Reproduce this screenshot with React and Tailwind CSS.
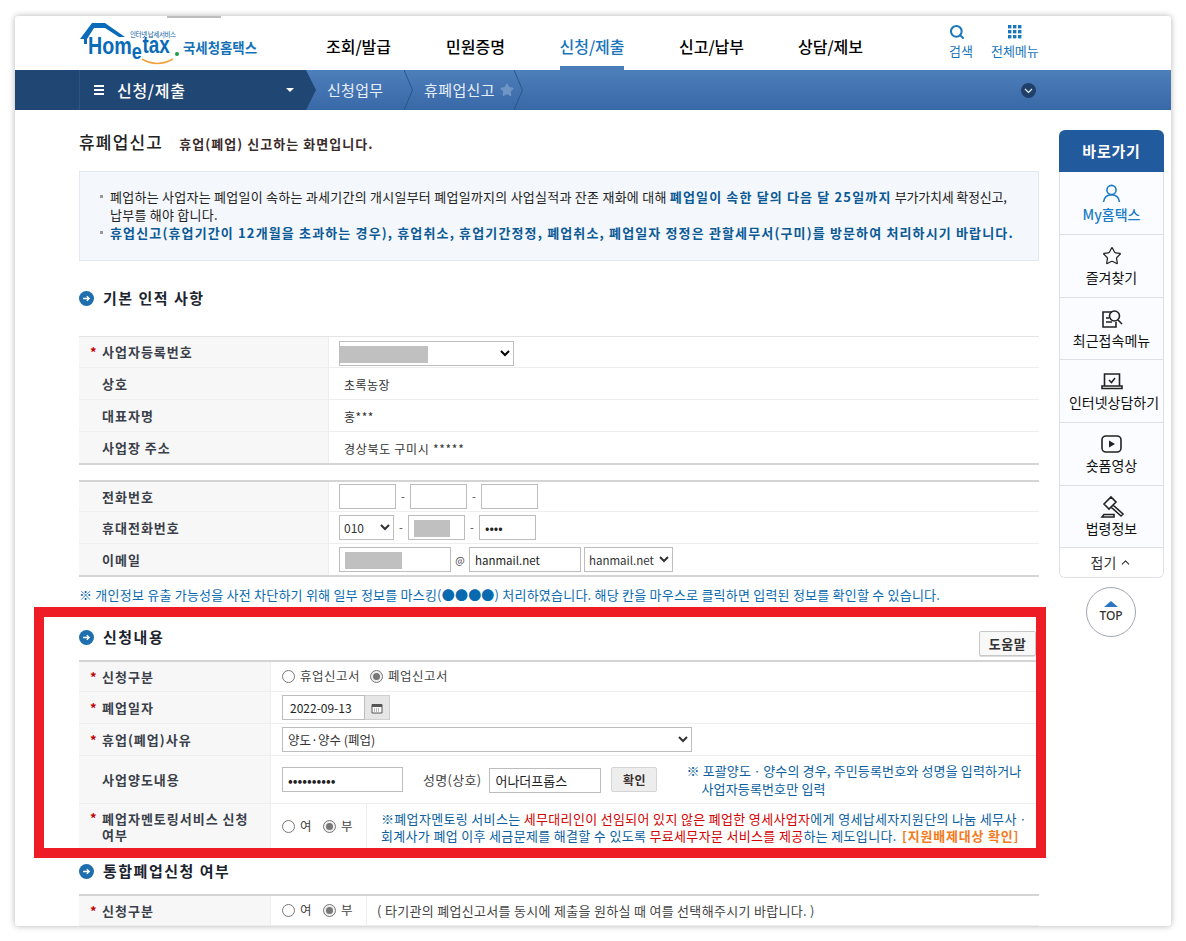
import React from "react";
import { Star, ChevronUp, Search } from "lucide-react";

const Bullet = () => (
  <svg width="15" height="15" viewBox="0 0 15 15" className="shrink-0">
    <circle cx="7.5" cy="7.5" r="7.5" fill="#1f6fae" />
    <path d="M4 7.5h6M7.8 5.2l2.4 2.3-2.4 2.3" stroke="#fff" strokeWidth="1.3" fill="none" />
  </svg>
);

const Section = ({ children, className = "" }) => (
  <div className={`flex items-center gap-[9px] ${className}`}>
    <Bullet />
    <span className="text-[15px] font-semibold tracking-[1.5px] text-[#1c2430]">{children}</span>
  </div>
);

const Req = () => <span className="absolute left-[11px] top-[calc(50%-8px)] text-[13px] font-bold leading-4 text-[#c00000]">*</span>;

const Row = ({ label, req, w = "w-[250px]", h = "h-8", border = "border-b border-[#eeeeee]", children, labelClass = "" }) => (
  <div className={`flex ${h} ${border}`}>
    <div className={`relative flex ${w} shrink-0 items-center border-r border-[#eeeeee] bg-[#f7f7f7] pl-[23px] text-[13px] font-semibold tracking-[1px] text-[#3a3f4a] ${labelClass}`}>
      {req && <Req />}
      <span>{label}</span>
    </div>
    <div className="flex min-w-0 flex-1 items-center">{children}</div>
  </div>
);

const Box = ({ w, mask, value, type = "text", maskW = 57, font = "text-[11.5px]" }) => (
  <span className="relative inline-block align-middle">
    <input readOnly type={type} defaultValue={value} className={`block h-[25px] ${w} border border-[#bdbdbd] bg-white px-[5px] ${font} text-[#222] outline-none`} />
    {mask && <span className="absolute left-[6px] top-[5px] h-[17px] bg-[#c0c0c0]" style={{ width: maskW }} />}
  </span>
);

const Radio = ({ on, label }) => (
  <span className="flex items-center gap-[5px] text-[12.5px] tracking-[0.5px] text-[#444]">
    <span className={`flex h-[13px] w-[13px] items-center justify-center rounded-full border ${on ? "border-[#777] bg-[#eee]" : "border-[#777] bg-white"}`}>
      {on && <span className="h-[7px] w-[7px] rounded-full bg-[#777]" />}
    </span>
    {label}
  </span>
);

const Dash = () => <span className="w-[14px] text-center text-[11px] text-[#444]">-</span>;

const Chevron = () => (
  <svg width="9" height="40" viewBox="0 0 9 40" className="shrink-0">
    <path d="M0 0l8.5 20L0 40" fill="none" stroke="#2c5487" strokeWidth="1" />
  </svg>
);

const Logo = () => (
  <svg width="182" height="46" viewBox="0 0 182 46" className="shrink-0">
    <path d="M1 19 L13 3 H26 L46 17 H40 L26 8 H15 L8 19 V24 H5 V19Z" fill="#0a6cb8" />
    <text x="51" y="17" fontSize="6.5" fill="#0b5c9f" textLength="46" fontFamily="'Noto Sans CJK KR',sans-serif">인터넷 납세서비스</text>
    <g transform="translate(9 0) scale(0.82 1)">
      <text x="0" y="34" fontWeight="700" fill="#0a6cb8" fontFamily="'Liberation Sans',sans-serif">
        <tspan fontSize="24">Hom</tspan>
        <tspan fontSize="22" y="39">e</tspan>
        <tspan fontSize="23" y="33" dx="1">tax</tspan>
      </text>
    </g>
    <circle cx="98" cy="34" r="2" fill="#1c9c4a" />
    <path d="M63 39 Q78 48 94 39" fill="none" stroke="#f2a23a" strokeWidth="1.5" />
    <text x="104" y="33" fontSize="14" fontWeight="700" fill="#1471b8" textLength="74" lengthAdjust="spacingAndGlyphs" fontFamily="'Noto Sans CJK KR',sans-serif">국세청홈택스</text>
  </svg>
);

const NavItem = ({ children, active, w }) => (
  <div className={`flex h-[54px] flex-col items-center justify-center whitespace-nowrap ${w}`}>
    <span className={`relative flex h-full w-full items-center justify-center pt-[6px] text-base font-medium ${active ? "text-[#1a75bb]" : "text-black"}`}>
      {children}
      {active && <span className="absolute bottom-0 left-0 right-0 h-1 bg-[#4b7db8]" />}
    </span>
  </div>
);

const SideItem = ({ icon, label, blue, h = "h-[63px]", labelClass = "" }) => (
  <div className={`flex ${h} flex-col items-center justify-center border-b border-[#dcdfe6] bg-[#fbfcff] pb-[2px] text-[14px] ${blue ? "font-medium text-[#1a7cc4]" : "text-[#111]"}`}>
    <span className="flex h-[24px] items-center">{icon}</span>
    <span className={`whitespace-nowrap leading-[18px] ${labelClass}`}>{label}</span>
  </div>
);

const ic = { fill: "none", stroke: "#222", strokeWidth: 1.6 };

export default function App() {
  return (
    <div className="relative h-[941px] w-[1186px] overflow-hidden bg-white font-['Noto_Sans_CJK_KR','Noto_Sans',sans-serif]">
      <div className="pl-[15px] pt-4">
        <div className="relative h-[910px] w-[1156px] overflow-hidden rounded-[3px] bg-white shadow-[0_0_6px_rgba(0,0,0,0.3)]">
          <span className="absolute left-[152px] top-0 h-[2px] w-[54px] bg-[#bdbdbd]" />
          {/* header */}
          <div className="flex h-[54px] items-center pl-[64px]">
            <Logo />
            <div className="ml-[65px] flex items-center">
              <NavItem w="w-[65px]">조회/발급</NavItem>
              <span className="w-[55px]" />
              <NavItem w="w-[59px]">민원증명</NavItem>
              <span className="w-[55px]" />
              <NavItem w="w-[64px]" active>신청/제출</NavItem>
              <span className="w-[55px]" />
              <NavItem w="w-[65px]">신고/납부</NavItem>
              <span className="w-[54px]" />
              <NavItem w="w-[65px]">상담/제보</NavItem>
            </div>
            <div className="ml-[86px] flex items-center gap-[18px] pb-[3px] text-[13px] text-[#1a75bb]">
              <div className="flex flex-col items-center leading-[16px]">
                <Search size={16} strokeWidth={3} className="mb-[3px] self-start" />
                검색
              </div>
              <div className="flex flex-col items-center leading-[16px]">
                <svg width="14" height="15" viewBox="0 0 14 15" className="mb-[3px]" fill="#1a75bb">
                  {[0, 5, 10].map((y) => [0, 5, 10].map((x) => <rect key={`${x}-${y}`} x={x} y={y} width="3.4" height="3.4" />))}
                </svg>
                전체메뉴
              </div>
            </div>
          </div>
          {/* tab bar */}
          <div className="relative flex h-10 items-center bg-gradient-to-b from-[#4d7fbb] to-[#3968a6] text-[15px] text-[#e6eef8]">
            <div className="flex h-10 w-[301px] shrink-0 items-center bg-[#204674] pl-[64px] text-white [clip-path:polygon(0_0,291px_0,301px_20px,291px_100%,0_100%)]">
              <span className="flex h-full w-full items-center border-l border-[#2b5587] pb-[1px] pl-[14px]">
                <svg width="10" height="10" viewBox="0 0 10 10" fill="#fff"><rect width="10" height="2" /><rect y="4" width="10" height="2" /><rect y="8" width="10" height="2" /></svg>
                <span className="ml-[13px] whitespace-nowrap text-base font-medium tracking-[0.7px]">신청/제출</span>
                <span className="ml-[100px] border-x-[4px] border-t-[4px] border-x-transparent border-t-white" />
              </span>
            </div>
            <span className="ml-[11px] w-[57px] whitespace-nowrap tracking-[0.3px]">신청업무</span>
            <span className="ml-[20px]"><Chevron /></span>
            <span className="ml-[11px] whitespace-nowrap tracking-[0.4px]">휴폐업신고</span>
            <Star size={14} fill="#6f95c4" stroke="#6f95c4" className="ml-[5px]" />
            <Chevron />
            <span className="absolute left-[1006px] top-[13px] flex h-[15px] w-[15px] items-center justify-center rounded-full bg-[#20406a]">
              <svg width="9" height="6" viewBox="0 0 9 6"><path d="M1 1l3.5 3.5L8 1" fill="none" stroke="#e6eef8" strokeWidth="1.2" /></svg>
            </span>
          </div>
          {/* body */}
          <div className="flex pl-[64px]">
            <main className="w-[960px] shrink-0">
              <div className="mt-5 flex h-6 items-center">
                <span className="text-[17px] font-medium tracking-[1.2px] text-[#222]">휴폐업신고</span>
                <span className="ml-[16px] mt-[3px] text-[13px] font-semibold tracking-[1.05px] text-[#3a2b2b]">휴업(폐업) 신고하는 화면입니다.</span>
              </div>
              <div className="mt-[17px] h-[90px] border border-[#e1e8f2] bg-[#f4f7fc] pl-[20px] pt-[16px] text-[13px] leading-[18px] tracking-[0.25px] text-[#222]">
                <div className="relative pl-[10px]">
                  <span className="absolute left-0 top-[7px] h-[3px] w-[3px] bg-[#9a9a9a]" />
                  폐업하는 사업자는 폐업일이 속하는 과세기간의 개시일부터 폐업일까지의 사업실적과 잔존 재화에 대해 <b className="font-semibold tracking-[1.15px] text-[#0b5a96]">폐업일이 속한 달의 다음 달 25일까지</b> <span className="tracking-[-0.2px]">부가가치세 확정신고,</span>
                  <br />납부를 해야 합니다.
                </div>
                <div className="relative pl-[10px] font-semibold tracking-[1.14px] text-[#0b5a96]">
                  <span className="absolute left-0 top-[7px] h-[3px] w-[3px] bg-[#9a9a9a]" />
                  휴업신고(휴업기간이 12개월을 초과하는 경우), 휴업취소, 휴업기간정정, 폐업취소, 폐업일자 정정은 관할세무서(구미)를 방문하여 처리하시기 바랍니다.
                </div>
              </div>
              <Section className="mt-[30px] h-[15px]">기본 인적 사항</Section>

              <div className="mt-[30px] border-b-2 border-t border-[#e4e4e4] border-b-[#d4d4d4]">
                <Row label="사업자등록번호" req h="h-[31px]">
                  <div className="pl-[10px]">
                    <span className="relative inline-block align-middle">
                      <select className="block h-[25px] w-[175px] border border-[#bdbdbd] bg-white text-[12px]"><option></option></select>
                      <span className="absolute left-[1px] top-[5px] h-[17px] w-[88px] bg-[#c0c0c0]" />
                    </span>
                  </div>
                </Row>
                <Row label="상호"><span className="pl-[15px] pt-[3px] text-[12px] tracking-[0.5px] text-[#333]">초록농장</span></Row>
                <Row label="대표자명"><span className="pl-[15px] pt-[3px] text-[12px] tracking-[0.5px] text-[#333]">홍***</span></Row>
                <Row label="사업장 주소" border="" h="h-[31px]"><span className="pl-[15px] pt-[3px] text-[12px] tracking-[0.7px] text-[#333]">경상북도 구미시 *****</span></Row>
              </div>
              <div className="mt-[15px] border-b-2 border-t-2 border-[#d4d4d4]">
                <Row label="전화번호" h="h-[30px]">
                  <div className="flex items-center pl-[10px]"><Box w="w-[57px]" /><Dash /><Box w="w-[57px]" /><Dash /><Box w="w-[57px]" /></div>
                </Row>
                <Row label="휴대전화번호">
                  <div className="flex items-center pl-[10px]">
                    <select defaultValue="010" className="h-[25px] w-[55px] border border-[#bdbdbd] bg-white text-[12px] text-[#333]"><option>010</option></select>
                    <Dash /><Box w="w-[57px]" mask maskW={36} /><Dash /><Box w="w-[57px]" type="password" value="1234" font="text-[13px]" />
                  </div>
                </Row>
                <Row label="이메일" border="" h="h-[31px]">
                  <div className="flex items-center pl-[10px]">
                    <Box w="w-[112px]" mask maskW={57} />
                    <span className="w-[18px] text-center text-[10px] text-[#444]">@</span>
                    <Box w="w-[112px]" value="hanmail.net" />
                    <select className="ml-[3px] h-[25px] w-[89px] border border-[#bdbdbd] bg-white text-[11.5px] text-[#333]"><option>hanmail.net</option></select>
                  </div>
                </Row>
              </div>
              <p className="mt-[10px] text-[13px] leading-4 tracking-[0.22px] text-[#0a6ab0]">※ 개인정보 유출 가능성을 사전 차단하기 위해 일부 정보를 마스킹(●●●●) 처리하였습니다. 해당 칸을 마우스로 클릭하면 입력된 정보를 확인할 수 있습니다.</p>

              <div className="mt-[26px] flex h-[31px] items-start justify-between">
                <Section className="h-[16px]">신청내용</Section>
                <span className="mr-[3px] mt-[2px] flex h-[25px] w-[57px] items-center justify-center rounded-[2px] border border-[#c8c8c8] bg-[#f8f8f8] text-[13px] font-semibold tracking-[0.6px] text-[#333] shadow-[0_1px_0_#ddd]">도움말</span>
              </div>
              <div className="border-t-2 border-[#d4d4d4]">
                <Row w="w-[192px]" h="h-[30px]" label="신청구분" req>
                  <div className="flex items-center gap-[10px] pl-[11px]"><Radio label="휴업신고서" /><Radio on label="폐업신고서" /></div>
                </Row>
                <Row w="w-[192px]" label="폐업일자" req>
                  <div className="flex items-center pl-[11px]">
                    <input readOnly defaultValue="2022-09-13" className="h-[25px] w-[83px] border border-[#bdbdbd] bg-white pl-[7px] text-[12px] text-[#222] outline-none" />
                    <span className="flex h-[25px] w-[25px] items-center justify-center border border-l-0 border-[#cfcfcf] bg-[#e6e6e6]">
                      <svg width="12" height="12" viewBox="0 0 12 12"><path d="M1 2.5h10v8.5H1z" fill="#fff" stroke="#555" /><path d="M1 2.5h10V5H1z" fill="#555" /><path d="M3 7h6M3 9h6" stroke="#777" strokeDasharray="1 1" /></svg>
                    </span>
                  </div>
                </Row>
                <Row w="w-[192px]" label="휴업(폐업)사유" req>
                  <div className="pl-[11px]">
                    <select className="block h-[25px] w-[410px] border border-[#bdbdbd] bg-white pl-[1px] text-[12.5px] text-[#333]"><option>양도·양수 (폐업)</option></select>
                  </div>
                </Row>
                <Row w="w-[192px]" h="h-[48px]" label="사업양도내용">
                  <div className="flex items-center pl-[11px]">
                    <Box w="w-[121px]" type="password" value="1234567890" font="text-[14px]" />
                    <span className="ml-[20px] whitespace-nowrap text-[13px] tracking-[0.3px] text-[#444]">성명(상호)</span>
                    <span className="ml-[8px]"><Box w="w-[112px]" value="어나더프롭스" font="text-[13px]" /></span>
                    <span className="ml-[10px] flex h-[25px] w-[46px] items-center justify-center rounded-[2px] border border-[#d4d4d4] bg-[#ededed] text-[12px] font-semibold tracking-[0.5px] text-[#3a3030]">확인</span>
                    <div className="ml-[29px] whitespace-nowrap pl-[15px] -indent-[15px] text-[13px] leading-[18px] tracking-[0.15px] text-[#0b5f9e]">※ 포괄양도ㆍ양수의 경우, 주민등록번호와 성명을 입력하거나<br />사업자등록번호만 입력</div>
                  </div>
                </Row>
                <Row w="w-[192px]" h="h-[45px]" border="" label={<>폐업자멘토링서비스 신청<br />여부</>} req labelClass="leading-[16px] tracking-[1.1px] [&>span:first-child]:top-[6px]">
                  <div className="flex h-full w-[96px] shrink-0 items-center gap-[11px] border-r border-[#eeeeee] pl-[11px]"><Radio label="여" /><Radio on label="부" /></div>
                  <div className="whitespace-nowrap pl-[14px] text-[13px] leading-[17px] tracking-[0.33px] text-[#0b5f9e]">
                    ※폐업자멘토링 서비스는 <span className="text-[#d40000]">세무대리인이 선임되어 있지 않은 폐업한 영세사업자</span>에게 영세납세자지원단의 나눔 세무사ㆍ<br />
                    회계사가 폐업 이후 세금문제를 해결할 수 있도록 <span className="text-[#d40000]">무료세무자문 서비스를 제공</span>하는 제도입니다. <b className="ml-[2px] font-semibold tracking-[0.8px] text-[#f47a20]">[지원배제대상 확인]</b>
                  </div>
                </Row>
              </div>
              <Section className="mt-[14px] h-[16px]">통합폐업신청 여부</Section>
              <div className="mt-[15px] border-t-2 border-[#d4d4d4]">
                <Row w="w-[192px]" h="h-[30px]" label="신청구분" req>
                  <div className="flex h-full w-[96px] shrink-0 items-center gap-[11px] border-r border-[#eeeeee] pl-[11px]"><Radio label="여" /><Radio on label="부" /></div>
                  <span className="whitespace-nowrap pl-[10px] text-[13px] tracking-[0.3px] text-[#444]">( 타기관의 폐업신고서를 동시에 제출을 원하실 때 여를 선택해주시기 바랍니다. )</span>
                </Row>
              </div>
            </main>
            {/* sidebar */}
            <aside className="ml-5 mt-5 w-[105px] shrink-0">
              <div className="flex h-[42px] items-center justify-center rounded-t-[6px] bg-[#225a9e] text-[15px] font-semibold tracking-[0.8px] text-white">바로가기</div>
              <div className="overflow-hidden rounded-b-[6px] border-x border-b border-[#dcdfe6]">
                <SideItem blue label="My홈택스" icon={<svg width="19" height="19" viewBox="0 0 19 19" fill="none" stroke="#1a7cc4" strokeWidth="1.6"><circle cx="9.5" cy="6" r="4.6" /><path d="M1.5 18c.6-4.5 3.8-7.2 8-7.2s7.400 2.700 8 7.200" /></svg>} />
                <SideItem label="즐겨찾기" icon={<Star size={20} strokeWidth={1.5} color="#222" />} />
                <SideItem h="h-[62px]" label="최근접속메뉴" icon={<svg width="22" height="20" viewBox="0 0 22 20" {...ic}><path d="M11 3H2v15h13v-5" /><circle cx="13.500" cy="7" r="5" /><path d="M17 11l4 4M5 13h6" /><path d="M5 9h3" /></svg>} />
                <SideItem label="인터넷상담하기" labelClass="ml-[5px]" icon={<svg width="22" height="18" viewBox="0 0 22 18" {...ic}><path d="M3.500 14V2h15v12M1 16.500h20v-2.500H1z" /><path d="M8 8l2.500 2.500L14 6" strokeWidth="1.500" /></svg>} />
                <SideItem label="숏폼영상" icon={<svg width="21" height="18" viewBox="0 0 21 18" {...ic}><rect x="1" y="1" width="19" height="16" rx="4" /><path d="M8 5.500l6 3.500-6 3.500z" fill="#222" stroke="none" /></svg>} />
                <SideItem h="h-[62px]" label="법령정보" icon={<svg width="26" height="24" viewBox="0 0 26 24" {...ic}><path d="M5 9l7-7 5 5-7 7zM14 10l10 9-2 2-10-9M3 22h12v-2.500H5z" /></svg>} />
                <div className="flex h-[29px] items-center justify-center gap-[3px] bg-white pb-[1px] text-[14px] text-[#333]">접기 <ChevronUp size={13} strokeWidth={2} /></div>
              </div>
              <div className="ml-[27px] mt-[9px] flex h-[50px] w-[50px] flex-col items-center justify-center rounded-full border border-[#a0a6b4] bg-white">
                <span className="border-x-[7px] border-b-[6px] border-x-transparent border-b-[#2f73c4]" />
                <span className="mt-[2px] font-['Noto_Sans',sans-serif] text-[12px] font-medium leading-[14px] text-[#333]">TOP</span>
              </div>
            </aside>
          </div>
        </div>
      </div>
      <div className="pointer-events-none absolute left-[34px] top-[607px] h-[251px] w-[1012px] border-[10px] border-[#ee1c25]" />
    </div>
  );
}
